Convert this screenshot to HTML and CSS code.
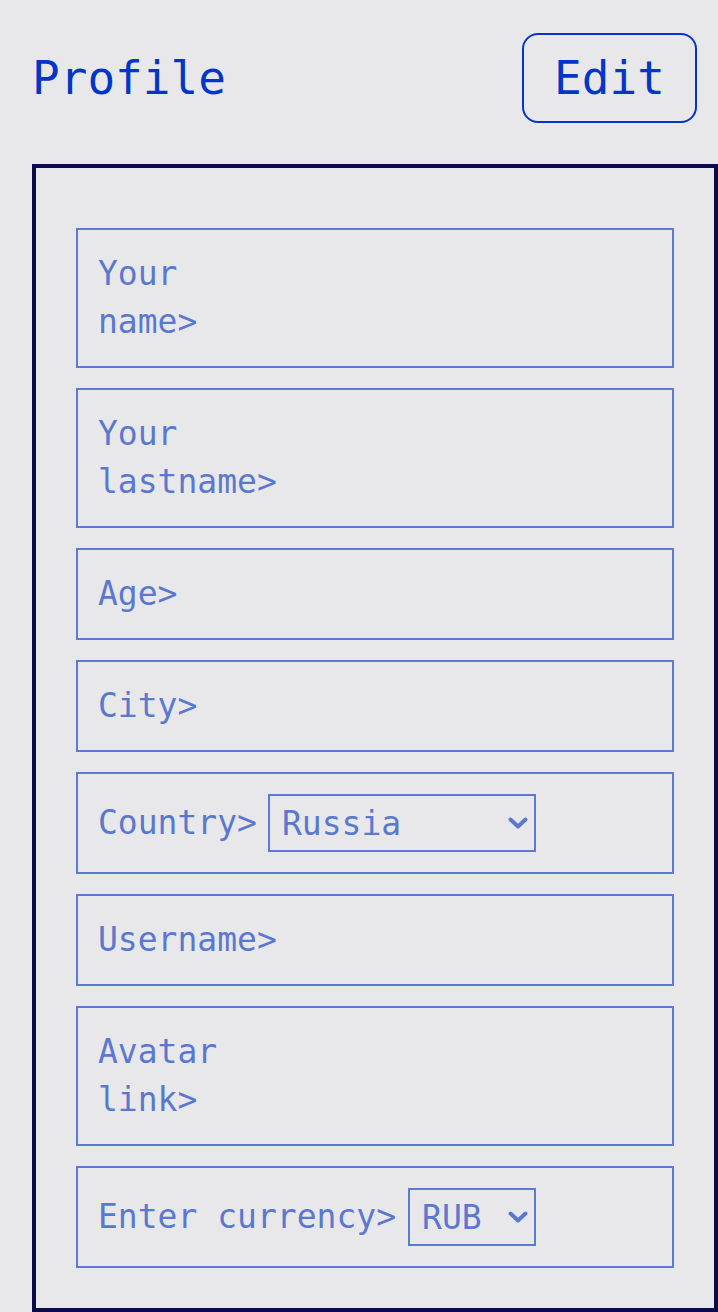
FILE: index.html
```html
<!DOCTYPE html>
<html lang="en">
<head>
<meta charset="utf-8">
<title>Profile</title>
<link rel="stylesheet" href="styles.css">
</head>
<body>
<header class="header">
  <h1 class="title">Profile</h1>
  <button class="edit-btn" type="button">Edit</button>
</header>
<form class="card">
  <label class="field field-tall"><span class="label">Your<br>name&gt;</span></label>
  <label class="field field-tall"><span class="label">Your<br>lastname&gt;</span></label>
  <label class="field"><span class="label">Age&gt;</span></label>
  <label class="field"><span class="label">City&gt;</span></label>
  <div class="field field-select">
    <span class="label">Country&gt;</span>
    <div class="select-wrap select-country">
      <select class="select"><option>Russia</option></select>
      <svg class="chevron" viewBox="0 0 20 12" width="20" height="12" aria-hidden="true"><path d="M2.5 2.5 L10 9.5 L17.5 2.5" fill="none" stroke="currentColor" stroke-width="4" stroke-linecap="round" stroke-linejoin="round"/></svg>
    </div>
  </div>
  <label class="field"><span class="label">Username&gt;</span></label>
  <label class="field field-tall"><span class="label">Avatar<br>link&gt;</span></label>
  <div class="field field-select">
    <span class="label">Enter currency&gt;</span>
    <div class="select-wrap select-currency">
      <select class="select"><option>RUB</option></select>
      <svg class="chevron" viewBox="0 0 20 12" width="20" height="12" aria-hidden="true"><path d="M2.5 2.5 L10 9.5 L17.5 2.5" fill="none" stroke="currentColor" stroke-width="4" stroke-linecap="round" stroke-linejoin="round"/></svg>
    </div>
  </div>
</form>
</body>
</html>
```

FILE: styles.css
```css
* {
  box-sizing: border-box;
}

html, body {
  margin: 0;
  padding: 0;
}

body {
  background: #e8e8eb;
  font-family: "DejaVu Sans Mono", "Liberation Mono", monospace;
  overflow: hidden;
}

.header {
  display: flex;
  justify-content: space-between;
  align-items: center;
  padding: 33px 21px 0 32px;
}

.title {
  margin: 0;
  font-size: 46px;
  font-weight: normal;
  line-height: 54px;
  color: #0236c8;
}

.edit-btn {
  width: 175px;
  height: 90px;
  border: 2px solid #0236c8;
  border-radius: 16px;
  background: transparent;
  color: #0236c8;
  font-family: inherit;
  font-size: 46px;
  line-height: 54px;
  padding: 0;
}

.card {
  margin: 41px 0 0 32px;
  width: 686px;
  border: 4px solid #0b0a4b;
  padding: 60px 40px 40px;
  display: flex;
  flex-direction: column;
  gap: 20px;
}

.field {
  display: flex;
  align-items: center;
  gap: 11px;
  border: 2px solid #5a7bd4;
  padding: 20px;
  font-size: 33px;
  line-height: 48px;
  color: #5a78d0;
}

.field-select .select-currency {
  margin-left: 1px;
}

.label {
  display: block;
}

.select-wrap {
  position: relative;
  height: 58px;
  border: 2px solid #5a7bd4;
  color: #5a78d0;
}

.select-country {
  width: 268px;
}

.select-currency {
  width: 128px;
}

.select {
  appearance: none;
  -webkit-appearance: none;
  width: 100%;
  height: 100%;
  border: none;
  background: transparent;
  font-family: inherit;
  font-size: 33px;
  color: inherit;
  padding: 0 40px 0 12px;
  outline: none;
}

.chevron {
  position: absolute;
  right: 6px;
  top: 50%;
  transform: translateY(-50%);
  color: #5a78d0;
}
```
